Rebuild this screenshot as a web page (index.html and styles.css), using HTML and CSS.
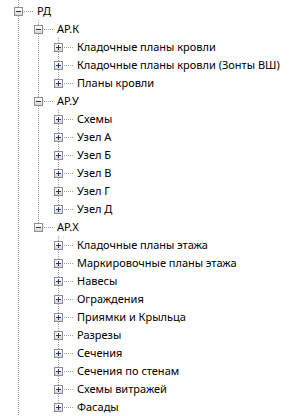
FILE: index.html
```html
<!DOCTYPE html>
<html>
<head>
<meta charset="utf-8">
<link rel="stylesheet" href="styles.css">
</head>
<body>
<div class="tree">
  <div class="row"><span class="conn root"><span class="box minus"></span></span><span class="label">РД</span></div>

  <div class="row"><span class="ind"></span><span class="conn mid"><span class="box minus"></span></span><span class="label">АР.К</span></div>
  <div class="row"><span class="ind"></span><span class="ind v"></span><span class="conn mid"><span class="box plus"></span></span><span class="label">Кладочные планы кровли</span></div>
  <div class="row"><span class="ind"></span><span class="ind v"></span><span class="conn mid"><span class="box plus"></span></span><span class="label">Кладочные планы кровли (Зонты ВШ)</span></div>
  <div class="row"><span class="ind"></span><span class="ind v"></span><span class="conn last"><span class="box plus"></span></span><span class="label">Планы кровли</span></div>

  <div class="row"><span class="ind"></span><span class="conn mid"><span class="box minus"></span></span><span class="label">АР.У</span></div>
  <div class="row"><span class="ind"></span><span class="ind v"></span><span class="conn mid"><span class="box plus"></span></span><span class="label">Схемы</span></div>
  <div class="row"><span class="ind"></span><span class="ind v"></span><span class="conn mid"><span class="box plus"></span></span><span class="label">Узел А</span></div>
  <div class="row"><span class="ind"></span><span class="ind v"></span><span class="conn mid"><span class="box plus"></span></span><span class="label">Узел Б</span></div>
  <div class="row"><span class="ind"></span><span class="ind v"></span><span class="conn mid"><span class="box plus"></span></span><span class="label">Узел В</span></div>
  <div class="row"><span class="ind"></span><span class="ind v"></span><span class="conn mid"><span class="box plus"></span></span><span class="label">Узел Г</span></div>
  <div class="row"><span class="ind"></span><span class="ind v"></span><span class="conn last"><span class="box plus"></span></span><span class="label">Узел Д</span></div>

  <div class="row"><span class="ind"></span><span class="conn last"><span class="box minus"></span></span><span class="label">АР.Х</span></div>
  <div class="row"><span class="ind"></span><span class="ind"></span><span class="conn mid"><span class="box plus"></span></span><span class="label">Кладочные планы этажа</span></div>
  <div class="row"><span class="ind"></span><span class="ind"></span><span class="conn mid"><span class="box plus"></span></span><span class="label">Маркировочные планы этажа</span></div>
  <div class="row"><span class="ind"></span><span class="ind"></span><span class="conn mid"><span class="box plus"></span></span><span class="label">Навесы</span></div>
  <div class="row"><span class="ind"></span><span class="ind"></span><span class="conn mid"><span class="box plus"></span></span><span class="label">Ограждения</span></div>
  <div class="row"><span class="ind"></span><span class="ind"></span><span class="conn mid"><span class="box plus"></span></span><span class="label">Приямки и Крыльца</span></div>
  <div class="row"><span class="ind"></span><span class="ind"></span><span class="conn mid"><span class="box plus"></span></span><span class="label">Разрезы</span></div>
  <div class="row"><span class="ind"></span><span class="ind"></span><span class="conn mid"><span class="box plus"></span></span><span class="label">Сечения</span></div>
  <div class="row"><span class="ind"></span><span class="ind"></span><span class="conn mid"><span class="box plus"></span></span><span class="label">Сечения по стенам</span></div>
  <div class="row"><span class="ind"></span><span class="ind"></span><span class="conn mid"><span class="box plus"></span></span><span class="label">Схемы витражей</span></div>
  <div class="row"><span class="ind"></span><span class="ind"></span><span class="conn last"><span class="box plus"></span></span><span class="label">Фасады</span></div>
</div>
</body>
</html>
```

FILE: styles.css
```css
html, body {
  margin: 0;
  padding: 0;
  background: #ffffff;
}

body {
  font-family: "Noto Sans", "Liberation Sans", sans-serif;
  font-size: 11px;
  color: #000000;
  overflow: hidden;
}

.tree {
  box-sizing: border-box;
  min-height: 416px;
  padding: 2px 0 0 8px;
  background-image: repeating-linear-gradient(to bottom, #a0a0a0 0 1px, transparent 1px 2px);
  background-size: 1px 100%;
  background-position: 18px 0;
  background-repeat: no-repeat;
}

.row {
  display: flex;
  height: 18px;
}

.ind {
  flex: none;
  width: 20px;
  height: 18px;
}

.ind.v {
  background-image: repeating-linear-gradient(to bottom, #a0a0a0 0 1px, transparent 1px 2px);
  background-size: 1px 18px;
  background-position: 10px 0;
  background-repeat: no-repeat;
}

.conn {
  flex: none;
  display: flex;
  align-items: flex-start;
  width: 28px;
  height: 18px;
  background-repeat: no-repeat;
}

.conn.root {
  background-image: repeating-linear-gradient(to right, #a0a0a0 0 1px, transparent 1px 2px);
  background-size: 10px 1px;
  background-position: 16px 9px;
}

.conn.mid {
  background-image:
    repeating-linear-gradient(to right, #a0a0a0 0 1px, transparent 1px 2px),
    repeating-linear-gradient(to bottom, #a0a0a0 0 1px, transparent 1px 2px);
  background-size: 10px 1px, 1px 18px;
  background-position: 16px 9px, 10px 0;
}

.conn.last {
  background-image:
    repeating-linear-gradient(to right, #a0a0a0 0 1px, transparent 1px 2px),
    repeating-linear-gradient(to bottom, #a0a0a0 0 1px, transparent 1px 2px);
  background-size: 10px 1px, 1px 9px;
  background-position: 16px 9px, 10px 0;
}

.box {
  box-sizing: border-box;
  width: 9px;
  height: 9px;
  margin: 5px 0 0 6px;
  border: 1px solid #8f8f8f;
  background-repeat: no-repeat;
}

.box.minus {
  background-image:
    linear-gradient(#1d3c73, #1d3c73),
    linear-gradient(#ffffff, #d6d6d6);
  background-size: 5px 1px, 100% 100%;
  background-position: 1px 3px, 0 0;
}

.box.plus {
  background-image:
    linear-gradient(#1d3c73, #1d3c73),
    linear-gradient(#1d3c73, #1d3c73),
    linear-gradient(#ffffff, #d6d6d6);
  background-size: 5px 1px, 1px 5px, 100% 100%;
  background-position: 1px 3px, 3px 1px, 0 0;
}

.label {
  padding-left: 1px;
  line-height: 18px;
  white-space: nowrap;
}
```
